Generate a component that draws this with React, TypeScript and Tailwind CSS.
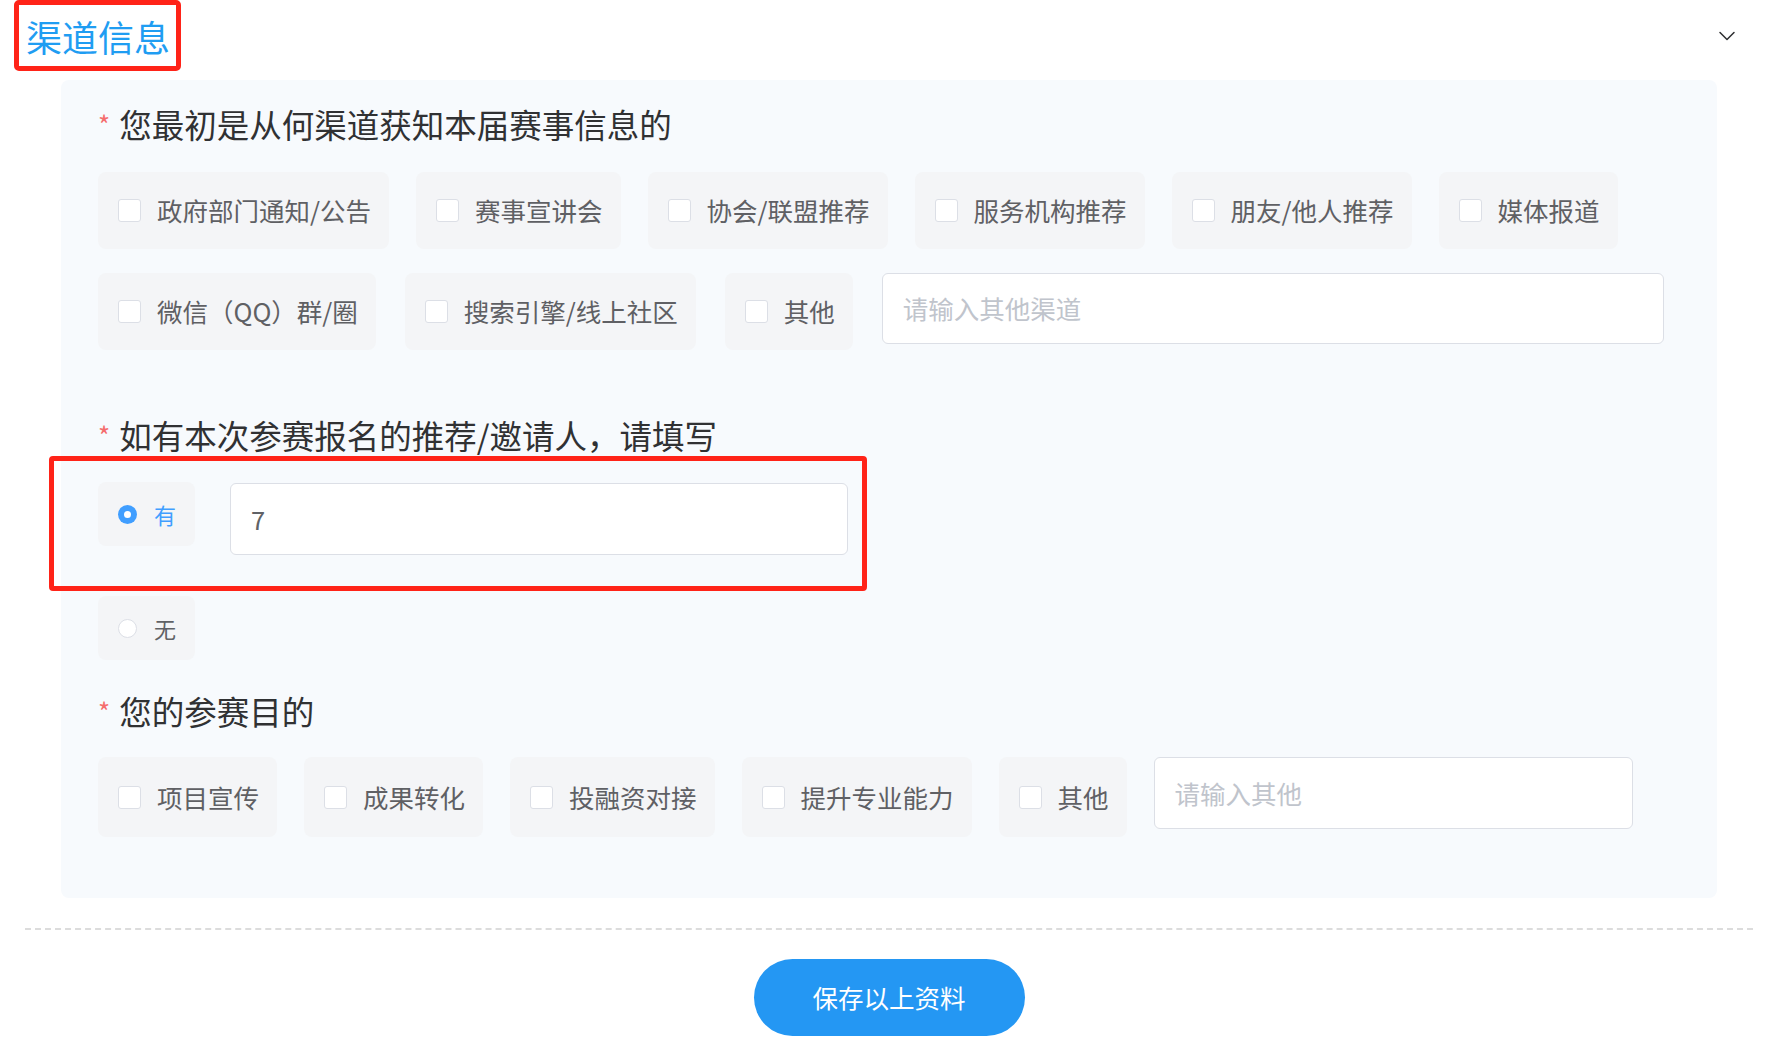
import React from "react"
import { ChevronDown } from "lucide-react"

const FONT = "font-['Noto_Sans_CJK_SC','Liberation_Sans',sans-serif]"

function CheckChip({ label, tall }: { label: string; tall?: boolean }) {
  return (
    <label
      className={`flex items-center gap-[16px] rounded-[8px] bg-[#f4f5f7] pl-[20px] pr-[18px] text-[25.5px] text-[#5f6064] ${
        tall ? "h-[80px]" : "h-[77px]"
      }`}
    >
      <span className="h-[23px] w-[23px] shrink-0 rounded-[3px] border border-[#dcdfe6] bg-white" />
      <span className="whitespace-nowrap">{label}</span>
    </label>
  )
}

function Question({ children }: { children: React.ReactNode }) {
  return (
    <div className="flex items-center text-[32.5px] leading-[40px] text-[#303133]">
      <span className="mr-[9px] text-[26px] text-[#f56c6c]">*</span>
      {children}
    </div>
  )
}

function TextInput({ className, value, placeholder }: { className: string; value?: string; placeholder?: string }) {
  return (
    <div
      className={`flex items-center rounded-[6px] border border-[#dcdfe6] bg-white px-[20px] text-[25.5px] ${className}`}
    >
      {value ? (
        <span className="text-[#606266]">{value}</span>
      ) : (
        <span className="text-[#c0c4cc]">{placeholder}</span>
      )}
    </div>
  )
}

export default function App() {
  const row1 = ["政府部门通知/公告", "赛事宣讲会", "协会/联盟推荐", "服务机构推荐", "朋友/他人推荐", "媒体报道"]
  const row2 = ["微信（QQ）群/圈", "搜索引擎/线上社区", "其他"]
  const row3 = ["项目宣传", "成果转化", "投融资对接", "提升专业能力", "其他"]

  return (
    <div className={`h-[1055px] w-[1775px] overflow-hidden bg-white ${FONT}`}>
      <div className="flex h-[71px] items-center justify-between pl-[14px] pr-[34px]">
        <div className="flex h-[71px] items-center rounded-[5px] border-[5px] border-[#ff2318] pl-[7px] pr-[6px] text-[36px] text-[#1f9df2]">
          渠道信息
        </div>
        <ChevronDown className="h-[28px] w-[28px] text-[#303133]" strokeWidth={1.3} />
      </div>

      <div className="ml-[61px] mr-[58px] mt-[9px] rounded-[8px] bg-[#f7fafd] pb-[61px] pl-[37px] pt-[24px]">
        <Question>您最初是从何渠道获知本届赛事信息的</Question>
        <div className="mt-[28px] flex gap-[27px]">
          {row1.map((l) => (
            <CheckChip key={l} label={l} />
          ))}
        </div>
        <div className="mt-[24px] flex items-start gap-[29px]">
          {row2.map((l) => (
            <CheckChip key={l} label={l} />
          ))}
          <TextInput className="h-[71px] w-[782px]" placeholder="请输入其他渠道" />
        </div>

        <div className="mt-[65px]">
          <Question>如有本次参赛报名的推荐/邀请人，请填写</Question>
        </div>
        <div className="relative mt-[27px] flex items-start gap-[35px]">
          <div className="flex h-[64px] items-center gap-[17px] rounded-[8px] bg-[#f4f5f7] pl-[20px] pr-[19px] text-[22px] text-[#409eff]">
            <span className="flex h-[19px] w-[19px] items-center justify-center rounded-full bg-[#409eff]">
              <span className="h-[7px] w-[7px] rounded-full bg-white" />
            </span>
            有
          </div>
          <TextInput className="mt-[1px] h-[72px] w-[618px]" value="7" />
          <div className="pointer-events-none absolute left-[-49px] top-[-26px] h-[135px] w-[818px] rounded-[4px] border-[5px] border-[#ff2318]" />
        </div>
        <div className="mt-[41px] flex">
          <div className="flex h-[64px] items-center gap-[17px] rounded-[8px] bg-[#f4f5f7] pl-[20px] pr-[19px] text-[22px] text-[#606266]">
            <span className="h-[19px] w-[19px] rounded-full border border-[#dcdfe6] bg-white" />
            无
          </div>
        </div>

        <div className="mt-[31px]">
          <Question>您的参赛目的</Question>
        </div>
        <div className="mt-[26px] flex items-start gap-[27px]">
          {row3.map((l, i) => (
            <CheckChip key={l + i} label={l} tall />
          ))}
          <TextInput className="h-[72px] w-[479px]" placeholder="请输入其他" />
        </div>
      </div>

      <div className="ml-[25px] mr-[22px] mt-[30px] border-t-2 border-dashed border-[#dcdcdc]" />

      <div className="mt-[29px] flex justify-center pl-[3px]">
        <button className="h-[77px] w-[271px] rounded-full bg-[#2497f3] text-[25.5px] text-white">保存以上资料</button>
      </div>
    </div>
  )
}
